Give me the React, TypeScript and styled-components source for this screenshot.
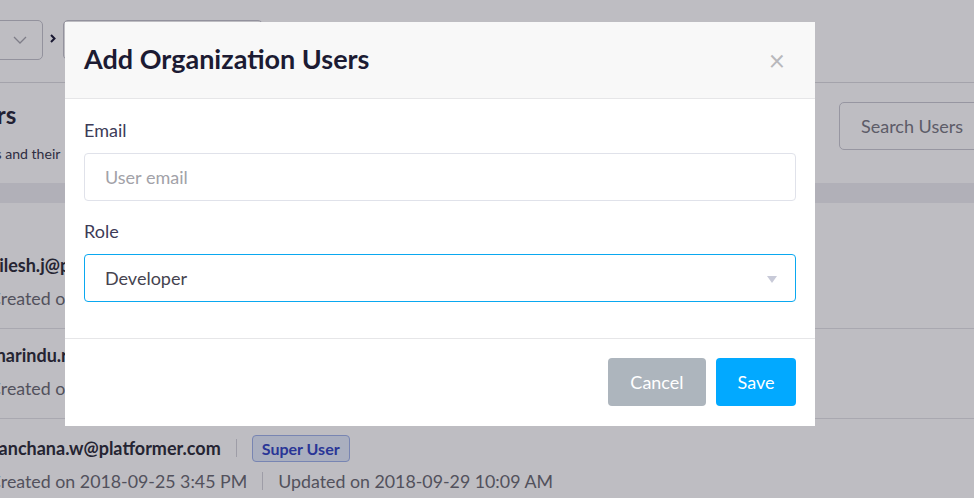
import React from "react";
import styled, { createGlobalStyle } from "styled-components";

const Global = createGlobalStyle`
  html, body { margin: 0; padding: 0; }
  body {
    width: 974px;
    height: 498px;
    overflow: hidden;
    font-family: Lato, "Open Sans", "Liberation Sans", sans-serif;
    background: #ffffff;
  }
`;

const Page = styled.div`
  position: relative;
  width: 974px;
  height: 498px;
  overflow: hidden;
  background: #ffffff;
`;

const TopBar = styled.div`
  height: 83px;
  box-sizing: border-box;
  border-bottom: 1px solid #dcdce0;
  display: flex;
  align-items: center;
  gap: 7px;
  padding-bottom: 2px;
`;

const Dropdown = styled.div<{ $width: number; $offset?: number }>`
  width: ${(p) => p.$width}px;
  margin-left: ${(p) => p.$offset ?? 0}px;
  height: 40px;
  box-sizing: border-box;
  border: 1px solid #c4c4cc;
  border-radius: 5px;
  display: flex;
  align-items: center;
  justify-content: flex-end;
  padding-right: 15px;
  color: #a8a8b0;
`;

const Crumb = styled.span`
  display: flex;
  color: #1e1d3a;
  margin-top: -4px;
`;

const HeaderSection = styled.div`
  height: 100px;
  display: flex;
  justify-content: space-between;
  align-items: flex-start;
`;

const TitleBlock = styled.div`
  margin-left: -188px;
  padding-top: 17px;
`;

const PageTitle = styled.h1`
  margin: 0;
  font-size: 24px;
  font-weight: 700;
  color: #2a2a3c;
  line-height: 30px;
`;

const PageSub = styled.p`
  margin: 15px 0 0;
  font-size: 14.1px;
  color: #3a3a50;
  white-space: nowrap;
`;

const SearchButton = styled.div`
  margin-top: 19px;
  margin-right: -25px;
  width: 160px;
  height: 48px;
  box-sizing: border-box;
  border: 1px solid #cacad2;
  border-radius: 5px;
  display: flex;
  align-items: center;
  padding-left: 21px;
  font-size: 18px;
  color: #7a7a84;
`;

const Band = styled.div`
  height: 20px;
  background: #eeeef2;
`;

const List = styled.div`
  padding-top: 36px;
`;

const Row = styled.div<{ $last?: boolean }>`
  margin-left: -11px;
  height: 90px;
  box-sizing: border-box;
  border-bottom: ${(p) => (p.$last ? "none" : "1px solid #e2e2e6")};
  padding-top: ${(p) => (p.$last ? 18 : 15)}px;
  display: flex;
  flex-direction: column;
  gap: 11px;
`;

const Line = styled.div`
  display: flex;
  align-items: center;
  white-space: nowrap;
  height: 22px;
  line-height: 22px;
`;

const UserEmail = styled.span`
  font-size: 18px;
  font-weight: 700;
  color: #2e2e3a;
`;

const Sep = styled.span`
  width: 1px;
  height: 18px;
  background: #d4d4da;
  margin: 0 15px;
`;

const Badge = styled.span`
  font-size: 16px;
  font-weight: 700;
  line-height: 19px;
  color: #3346c4;
  background: #e4ecfb;
  border: 1px solid #9fb2ea;
  border-radius: 4px;
  padding: 3px 9px;
`;

const Meta = styled.span`
  font-size: 17.8px;
  color: #6c6c74;
`;

const Overlay = styled.div`
  position: absolute;
  inset: 0;
  background: rgba(14, 11, 29, 0.27);
  padding: 22px 0 0 65px;
  box-sizing: border-box;
`;

const Modal = styled.div`
  width: 750px;
  background: #ffffff;
`;

const ModalHeader = styled.div`
  height: 77px;
  box-sizing: border-box;
  background: #f8f8f8;
  border-bottom: 1px solid #e6e6e8;
  display: flex;
  align-items: center;
  justify-content: space-between;
  padding: 0 30px 3px 19px;
`;

const ModalTitle = styled.h2`
  margin: 0;
  font-size: 27px;
  font-weight: 700;
  color: #1c1b33;
`;

const Close = styled.span`
  font-size: 28px;
  color: #b8b8bc;
  line-height: 1;
  margin-top: 2px;
`;

const ModalBody = styled.div`
  padding: 20px 19px 36px;
  border-bottom: 1px solid #e6e6e8;
`;

const Label = styled.div<{ $top?: number }>`
  font-size: 18px;
  color: #3d3b58;
  margin-top: ${(p) => p.$top ?? 0}px;
  margin-bottom: 12px;
  line-height: 22px;
`;

const Field = styled.div<{ $focused?: boolean }>`
  height: 48px;
  box-sizing: border-box;
  border: 1px solid ${(p) => (p.$focused ? "#0aa8f0" : "#e0e2ea")};
  border-radius: 4px;
  display: flex;
  align-items: center;
  justify-content: space-between;
  padding: 0 18px 0 20px;
  font-size: 18px;
`;

const Placeholder = styled.span`
  color: #a2a2a8;
`;

const Value = styled.span`
  color: #45434f;
`;

const Arrow = styled.span`
  width: 0;
  height: 0;
  border-left: 5px solid transparent;
  border-right: 5px solid transparent;
  border-top: 7px solid #c8cad8;
  margin-top: 2px;
`;

const ModalFooter = styled.div`
  display: flex;
  justify-content: flex-end;
  gap: 10px;
  padding: 19px 19px 20px;
`;

const Button = styled.button<{ $primary?: boolean }>`
  height: 48px;
  border: none;
  border-radius: 4px;
  padding: 0 ${(p) => (p.$primary ? "21.5px" : "22.5px")};
  background: ${(p) => (p.$primary ? "#02a9ff" : "#adb5bd")};
  color: #ffffff;
  font-family: inherit;
  font-size: 18px;
`;

const ChevronDown = () => (
  <svg width="14" height="8" viewBox="0 0 14 8" fill="none">
    <path d="M1 1l6 6 6-6" stroke="currentColor" strokeWidth="1.3" />
  </svg>
);

const ChevronRight = () => (
  <svg width="6" height="9" viewBox="0 0 6 9" fill="none">
    <path d="M1 1l3.5 3.5L1 8" stroke="currentColor" strokeWidth="2" />
  </svg>
);

export default function App() {
  return (
    <>
      <Global />
      <Page>
        <TopBar>
          <Dropdown $width={100} $offset={-57}>
            <ChevronDown />
          </Dropdown>
          <Crumb>
            <ChevronRight />
          </Crumb>
          <Dropdown $width={200} />
        </TopBar>
        <HeaderSection>
          <TitleBlock>
            <PageTitle>Organization Users</PageTitle>
            <PageSub>Manage the organization users and their</PageSub>
          </TitleBlock>
          <SearchButton>Search Users</SearchButton>
        </HeaderSection>
        <Band />
        <List>
          <Row>
            <Line>
              <UserEmail>nilesh.j@platformer.com</UserEmail>
            </Line>
            <Line>
              <Meta>Created on 2018-09-20 11:02 AM</Meta>
            </Line>
          </Row>
          <Row>
            <Line>
              <UserEmail>tharindu.r@platformer.com</UserEmail>
            </Line>
            <Line>
              <Meta>Created on 2018-09-24 9:12 AM</Meta>
            </Line>
          </Row>
          <Row $last>
            <Line>
              <UserEmail>kanchana.w@platformer.com</UserEmail>
              <Sep />
              <Badge>Super User</Badge>
            </Line>
            <Line>
              <Meta>Created on 2018-09-25 3:45 PM</Meta>
              <Sep />
              <Meta>Updated on 2018-09-29 10:09 AM</Meta>
            </Line>
          </Row>
        </List>
        <Overlay>
          <Modal>
            <ModalHeader>
              <ModalTitle>Add Organization Users</ModalTitle>
              <Close>×</Close>
            </ModalHeader>
            <ModalBody>
              <Label>Email</Label>
              <Field>
                <Placeholder>User email</Placeholder>
              </Field>
              <Label $top={19}>Role</Label>
              <Field $focused>
                <Value>Developer</Value>
                <Arrow />
              </Field>
            </ModalBody>
            <ModalFooter>
              <Button>Cancel</Button>
              <Button $primary>Save</Button>
            </ModalFooter>
          </Modal>
        </Overlay>
      </Page>
    </>
  );
}
